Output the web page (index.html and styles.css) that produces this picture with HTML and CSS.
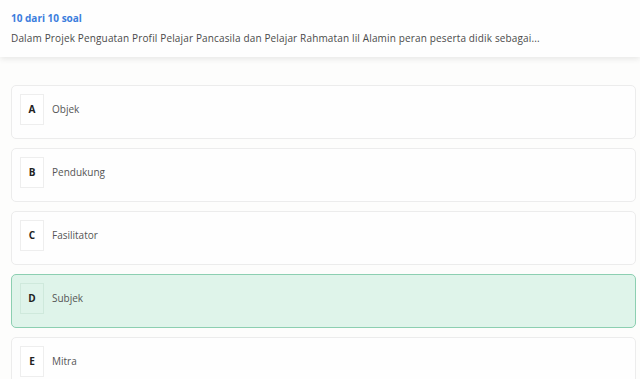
FILE: index.html
```html
<!DOCTYPE html>
<html lang="id">
<head>
    <meta charset="UTF-8">
    <meta name="viewport" content="width=device-width, initial-scale=1.0">
    <title>Soal</title>
    <link rel="stylesheet" href="styles.css">
</head>
<body>
    <div class="question-header">
        <div class="question-count">10 dari 10 soal</div>
        <div class="question-text">Dalam Projek Penguatan Profil Pelajar Pancasila dan Pelajar Rahmatan lil Alamin peran peserta didik sebagai...</div>
    </div>

    <div class="options">
        <div class="option">
            <span class="option-letter">A</span>
            <span class="option-label">Objek</span>
        </div>
        <div class="option">
            <span class="option-letter">B</span>
            <span class="option-label">Pendukung</span>
        </div>
        <div class="option">
            <span class="option-letter">C</span>
            <span class="option-label">Fasilitator</span>
        </div>
        <div class="option selected">
            <span class="option-letter">D</span>
            <span class="option-label">Subjek</span>
        </div>
        <div class="option">
            <span class="option-letter">E</span>
            <span class="option-label">Mitra</span>
        </div>
    </div>
</body>
</html>
```

FILE: styles.css
```css
:root {
    --primary-color: #3b7ddd;
    --text-color: #4a4a4a;
    --border-color: #ececec;
    --selected-bg: #dff4ea;
    --selected-border: #8ccfb1;
}

body {
    font-family: 'Open Sans', sans-serif;
    margin: 0;
    padding: 0;
    background-color: #fdfdfc;
    overflow: hidden;
}

.question-header {
    background: #fefefe;
    height: 57px;
    box-sizing: border-box;
    padding: 11px 11px 0;
    box-shadow: 0 2px 6px rgba(0, 0, 0, 0.09);
}

.question-count {
    color: var(--primary-color);
    font-weight: 700;
    font-size: 10px;
    line-height: 14px;
}

.question-text {
    color: var(--text-color);
    font-size: 10px;
    line-height: 14px;
    margin-top: 6px;
    letter-spacing: 0.15px;
}

.options {
    display: flex;
    flex-direction: column;
    gap: 9px;
    padding: 28px 4px 0 11px;
}

.option {
    display: flex;
    align-items: center;
    gap: 8px;
    height: 54px;
    box-sizing: border-box;
    padding: 0 8px 6px;
    background: #fefefe;
    border: 1px solid var(--border-color);
    border-radius: 5px;
}

.option-letter {
    display: flex;
    justify-content: center;
    align-items: center;
    width: 24px;
    height: 31px;
    box-sizing: border-box;
    border: 1px solid #eeeeee;
    background: #ffffff;
    font-size: 10px;
    font-weight: 700;
    color: #222;
}

.option-label {
    font-size: 10px;
    color: #555;
}

.option.selected {
    background: var(--selected-bg);
    border-color: var(--selected-border);
}

.option.selected .option-letter {
    background: transparent;
    border-color: #cfe9dc;
}
```
